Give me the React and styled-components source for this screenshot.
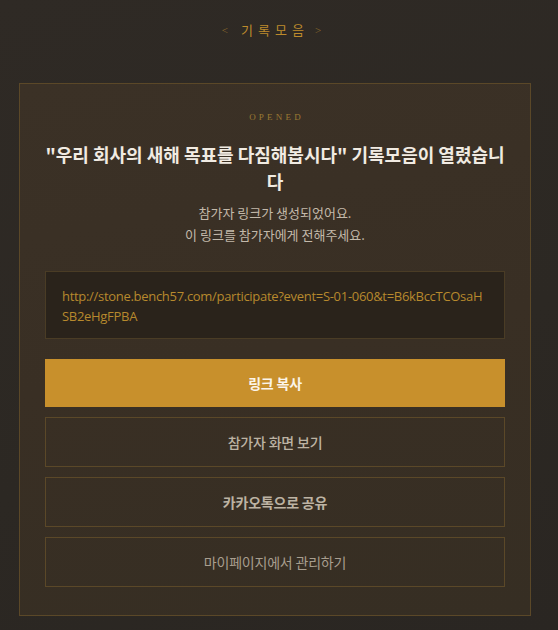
import React from "react";
import styled, { createGlobalStyle } from "styled-components";

const Global = createGlobalStyle`
  html, body { margin: 0; padding: 0; }
  body {
    background: linear-gradient(160deg, #2f2a25 0%, #2c2823 60%, #2a2622 100%);
    min-height: 630px;
    font-family: "Noto Sans CJK KR", "Noto Sans", sans-serif;
    -webkit-font-smoothing: antialiased;
  }
`;

const Page = styled.div`
  width: 550px;
  min-height: 630px;
  box-sizing: border-box;
  padding: 20px 0 0;
  display: flex;
  flex-direction: column;
  align-items: center;
`;

const Header = styled.div`
  height: 20px;
  line-height: 20px;
  font-size: 13px;
  color: #bd8b2c;
  font-family: "Noto Sans CJK KR", sans-serif;
  font-weight: 400;
  display: flex;
  align-items: center;
  margin-bottom: 43px;
  margin-left: -7px;
`;

const HeaderText = styled.span`
  letter-spacing: 5px;
`;

const Arrow = styled.span`
  color: #8f6c2c;
  font-size: 11px;
  font-family: "Liberation Serif", serif;
  margin: ${(p) => (p.$side === "left" ? "0 13px 0 0" : "0 0 0 6px")};
`;

const Card = styled.section`
  width: 512px;
  box-sizing: border-box;
  border: 1px solid #5b4828;
  background: linear-gradient(170deg, #3b3126 0%, #392f24 50%, #362e23 100%);
  padding: 26px 25px 28px;
  display: flex;
  flex-direction: column;
  align-items: stretch;
  text-align: center;
`;

const Eyebrow = styled.div`
  font-family: "Liberation Serif", serif;
  font-size: 9px;
  line-height: 14px;
  letter-spacing: 3.2px;
  color: #9b7a33;
  margin-bottom: 17px;
  padding-left: 3px;
`;

const Title = styled.h1`
  margin: 0;
  font-size: 18px;
  line-height: 27px;
  font-weight: 700;
  letter-spacing: 0;
  color: #f1ebe2;
`;

const Sub = styled.p`
  margin: 7px 0 0;
  font-size: 13px;
  line-height: 22px;
  color: #c3b9aa;
`;

const LinkBox = styled.div`
  margin-top: 25px;
  border: 1px solid #4a3c25;
  background: #2a231b;
  padding: 14px 16px 12px;
  text-align: left;
  font-family: "Open Sans", "Noto Sans", sans-serif;
  font-size: 13px;
  line-height: 20px;
  letter-spacing: -0.3px;
  color: #b7892d;
  word-break: break-all;
`;

const Actions = styled.div`
  margin-top: 20px;
  display: flex;
  flex-direction: column;
  gap: 10px;
`;

const Button = styled.button`
  height: ${(p) => (p.$primary ? "48px" : "50px")};
  box-sizing: border-box;
  border: ${(p) => (p.$primary ? "none" : "1px solid #5b4828")};
  background: ${(p) => (p.$primary ? "#c8902c" : "transparent")};
  color: ${(p) => (p.$primary ? "#fbf5ea" : p.$dim ? "#a89e8f" : "#bdb3a3")};
  font-family: "Noto Sans CJK KR", sans-serif;
  font-size: 14px;
  font-weight: ${(p) => p.$weight || 400};
  letter-spacing: -0.2px;
  cursor: pointer;
  padding: 0;
`;

export default function App() {
  return (
    <>
      <Global />
      <Page>
        <Header>
          <Arrow $side="left">&lt;</Arrow>
          <HeaderText>기록모음</HeaderText>
          <Arrow $side="right">&gt;</Arrow>
        </Header>
        <Card>
          <Eyebrow>OPENED</Eyebrow>
          <Title>"우리 회사의 새해 목표를 다짐해봅시다" 기록모음이 열렸습니다</Title>
          <Sub>
            참가자 링크가 생성되었어요.
            <br />
            이 링크를 참가자에게 전해주세요.
          </Sub>
          <LinkBox>
            http://stone.bench57.com/participate?event=S-01-060&amp;t=B6kBccTCOsaHSB2eHgFPBA
          </LinkBox>
          <Actions>
            <Button $primary $weight={700}>링크 복사</Button>
            <Button $weight={500}>참가자 화면 보기</Button>
            <Button $weight={700}>카카오톡으로 공유</Button>
            <Button $dim $weight={400}>마이페이지에서 관리하기</Button>
          </Actions>
        </Card>
      </Page>
    </>
  );
}
